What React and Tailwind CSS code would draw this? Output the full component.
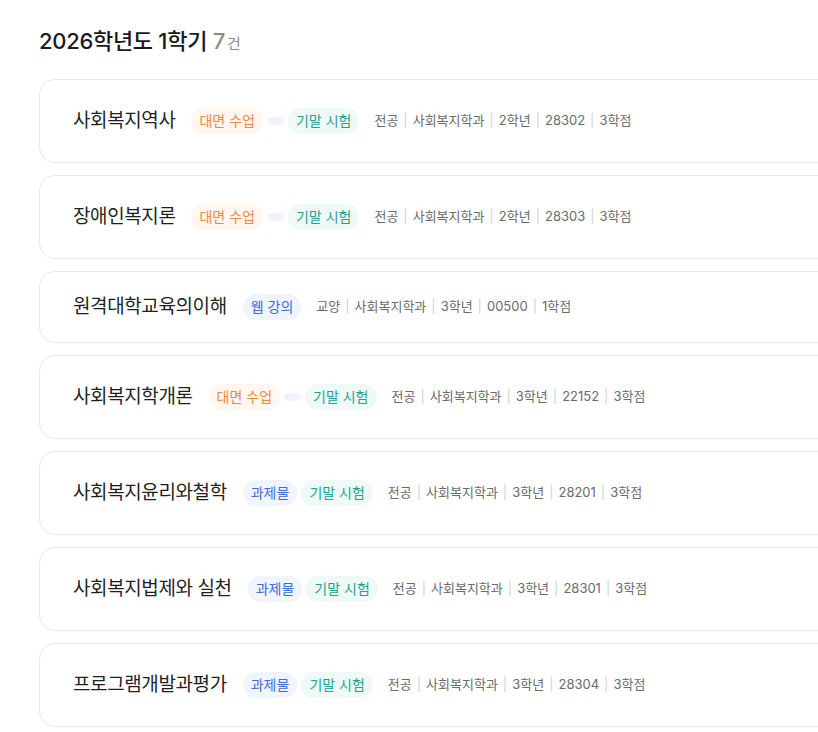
import React from 'react';

const courses = [
  { name: '사회복지역사', tags: ['face', 'blank', 'exam'], meta: ['전공', '사회복지학과', '2학년', '28302', '3학점'] },
  { name: '장애인복지론', tags: ['face', 'blank', 'exam'], meta: ['전공', '사회복지학과', '2학년', '28303', '3학점'] },
  { name: '원격대학교육의이해', tags: ['web'], meta: ['교양', '사회복지학과', '3학년', '00500', '1학점'], short: true },
  { name: '사회복지학개론', tags: ['face', 'blank', 'exam'], meta: ['전공', '사회복지학과', '3학년', '22152', '3학점'] },
  { name: '사회복지윤리와철학', tags: ['task', 'exam'], meta: ['전공', '사회복지학과', '3학년', '28201', '3학점'] },
  { name: '사회복지법제와 실천', tags: ['task', 'exam'], meta: ['전공', '사회복지학과', '3학년', '28301', '3학점'] },
  { name: '프로그램개발과평가', tags: ['task', 'exam'], meta: ['전공', '사회복지학과', '3학년', '28304', '3학점'] },
];

function Tag({ kind }) {
  if (kind === 'blank') {
    return <span className="w-[17px] h-[8px] rounded-full bg-[#f0f4fb]" />;
  }
  const styles = {
    face: { label: '대면 수업', cls: 'bg-[#fff7f0] text-[#f08a3c]' },
    exam: { label: '기말 시험', cls: 'bg-[#effaf7] text-[#1ea394]' },
    web: { label: '웹 강의', cls: 'bg-[#f0f5fd] text-[#3b6fd6]' },
    task: { label: '과제물', cls: 'bg-[#f0f5fd] text-[#3b6fd6]' },
  };
  const s = styles[kind];
  return (
    <span className={`h-[26px] px-[8px] rounded-full text-[14px] leading-[26px] ${s.cls}`}>{s.label}</span>
  );
}

function CourseCard({ course }) {
  return (
    <div
      className={`w-[800px] shrink-0 border border-[#e9e9ec] rounded-[16px] bg-white flex items-center pl-[33px] ${
        course.short ? 'h-[72px]' : 'h-[84px]'
      }`}
    >
      <span className="text-[19px] text-[#1f1f1f] tracking-[-0.4px] mr-[16px]">{course.name}</span>
      <div className="flex items-center gap-[4px] mr-[15px]">
        {course.tags.map((t, i) => (
          <Tag key={i} kind={t} />
        ))}
      </div>
      <div className="flex items-center text-[13px] text-[#6b6b6b]">
        {course.meta.map((m, i) => (
          <React.Fragment key={i}>
            {i > 0 && <span className="mx-[5px] text-[#d2d2d2]">|</span>}
            <span>{m}</span>
          </React.Fragment>
        ))}
      </div>
    </div>
  );
}

export default function App() {
  return (
    <div
      className="w-[818px] h-[732px] overflow-hidden bg-white pl-[39px] pt-[25px]"
      style={{ fontFamily: 'Inter, "Noto Sans CJK KR", sans-serif' }}
    >
      <h2 className="text-[22px] leading-[32px] font-medium text-[#1a1a1a] mb-[19px] tracking-[-0.3px]">
        2026학년도 1학기 <span className="text-[#8a8a8a]">7</span>
        <span className="text-[15px] text-[#8a8a8a] font-normal ml-[2px]">건</span>
      </h2>
      <div className="flex flex-col gap-[12px]">
        {courses.map((c, i) => (
          <CourseCard key={i} course={c} />
        ))}
      </div>
    </div>
  );
}
